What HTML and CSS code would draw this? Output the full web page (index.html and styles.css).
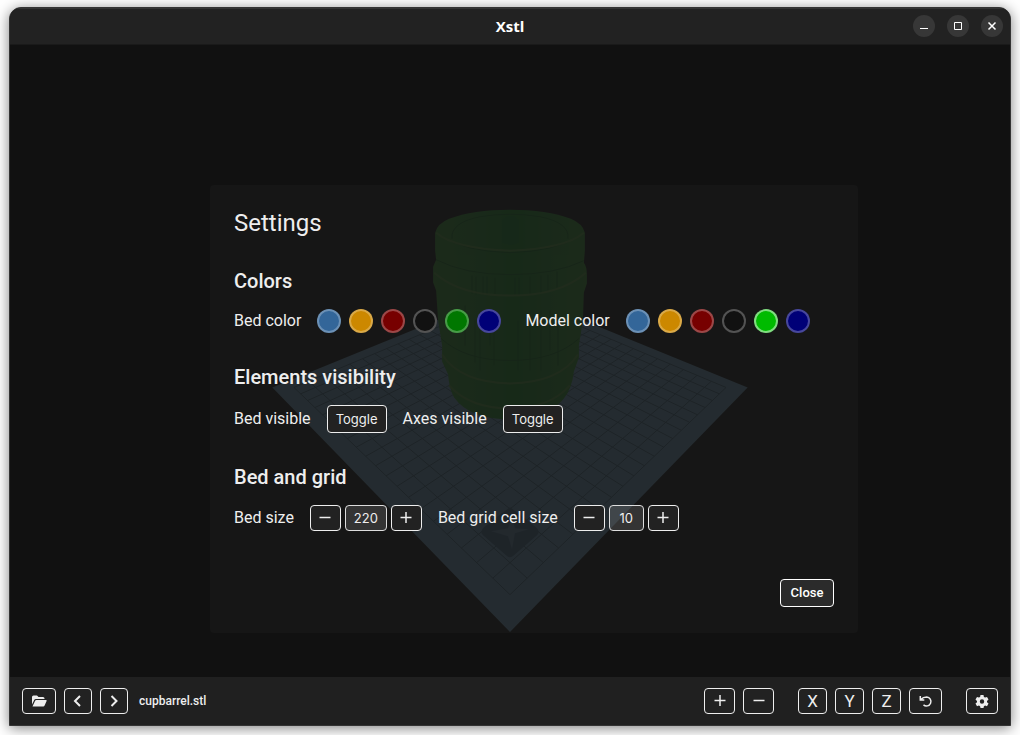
FILE: index.html
```html
<!DOCTYPE html>
<html lang="en">
<head>
<meta charset="utf-8">
<title>Xstl</title>
<link rel="stylesheet" href="styles.css">
</head>
<body>
<div class="window">
  <header class="titlebar">
    <h1 class="title">Xstl</h1>
    <div class="window-controls">
      <button class="window-button" aria-label="Minimize"><svg viewBox="0 0 22 22"><path d="M7 13.5h8"/></svg></button>
      <button class="window-button" aria-label="Maximize"><svg viewBox="0 0 22 22"><path d="M7.5 7.5h7v7h-7z"/></svg></button>
      <button class="window-button" aria-label="Close window"><svg viewBox="0 0 22 22"><path d="M7.5 7.500l7 7M14.500 7.500l-7 7" stroke-width="1.500"/></svg></button>
    </div>
  </header>

  <main class="viewport">
    <svg class="scene" viewBox="0 0 1000 633" aria-hidden="true">
      <defs>
        <linearGradient id="wood" x1="0" x2="1" y1="0" y2="0">
          <stop offset="0" stop-color="#36942c"/>
          <stop offset="0.3" stop-color="#26902a"/>
          <stop offset="0.52" stop-color="#168c1e"/>
          <stop offset="0.75" stop-color="#26902a"/>
          <stop offset="1" stop-color="#36942c"/>
        </linearGradient>
      </defs>
      <g transform="translate(-10 -44)">
        <path class="bed" d="M510 632 748 387 510 290 272 387z"/>
        <path class="grid-lines" id="grid"/>
        <path class="mark" d="M484 527 Q496 517 510 507 Q524 517 536 527 Q541 531 537 535 L514 555 Q510 559 506 555 L483 535 Q479 531 484 527z"/>
        <path class="mark-cross" d="M491 531l17-3 4-12 3 12 14 1-14 4-3 16-4-13z"/>
        <path fill="url(#wood)" d="M435 232 Q437 223 449 218 Q473 209 510 209 Q547 209 571 218 Q583 223 585 232 V250 L584 262 Q587 266 587 274 V283 L584 292 L583 320 L579 345 V357 L574 371 Q572 388 564 398 Q547 419 510 419 Q470 419 454 397 Q449 388 448 374 L442 361 V345 L438 320 L436 290 L433 282 V266 L436 259 L435 250z"/>
        <g class="barrel-dark">
          <path d="M440 235 Q465 251 510 252 Q555 251 580 235"/>
          <path d="M436 259 Q465 274 510 274 Q555 274 584 260"/>
          <path d="M441 338 Q465 360 510 360 Q555 360 579 338"/>
          <path d="M452 238 Q450 222 480 216 Q510 211 540 216 Q570 222 568 238"/>
          <path d="M472 275v18M476 276v18M483 276v18M487 276v19M495 277v18M515 277v18M519 277v18M530 276v18M541 275v18M548 274v16M557 271v16M465 305v40M475 320v42M480 310v60M490 315v30M494 320v45M518 320v50M530 310v60M541 310v60M550 310v40M558 315v50"/>
        </g>
        <g class="barrel-light">
          <path d="M436 232 Q455 248 510 250 Q565 248 584 232"/>
          <path d="M434 272 Q460 295 510 295 Q560 295 586 272"/>
          <path d="M442 354 Q460 382 510 383 Q560 382 578 354"/>
          <path d="M449 385 Q470 408 510 408 Q550 408 570 385"/>
        </g>
        <path class="barrel-core" d="M502 219 Q510 211 519 219 V242 Q510 246 502 242z"/>
      </g>
    </svg>

    <section class="settings" aria-labelledby="settings-title">
      <h2 class="settings-title" id="settings-title">Settings</h2>

      <div class="group">
        <h3 class="group-title">Colors</h3>
        <div class="row color-row">
          <div class="field" role="group" aria-labelledby="bed-color">
            <span id="bed-color">Bed color</span>
            <div class="swatches">
              <button class="swatch steel" aria-label="Blue"></button>
              <button class="swatch orange" aria-label="Orange"></button>
              <button class="swatch red" aria-label="Red"></button>
              <button class="swatch black" aria-label="Black"></button>
              <button class="swatch green" aria-label="Green"></button>
              <button class="swatch navy" aria-label="Navy"></button>
            </div>
          </div>
          <div class="field" role="group" aria-labelledby="model-color">
            <span id="model-color">Model color</span>
            <div class="swatches">
              <button class="swatch steel" aria-label="Blue"></button>
              <button class="swatch orange" aria-label="Orange"></button>
              <button class="swatch red" aria-label="Red"></button>
              <button class="swatch black" aria-label="Black"></button>
              <button class="swatch green selected" aria-label="Green"></button>
              <button class="swatch navy" aria-label="Navy"></button>
            </div>
          </div>
        </div>
      </div>

      <div class="group">
        <h3 class="group-title">Elements visibility</h3>
        <div class="row">
          <div class="field"><label for="bed-toggle">Bed visible</label><button class="button" id="bed-toggle">Toggle</button></div>
          <div class="field"><label for="axes-toggle">Axes visible</label><button class="button" id="axes-toggle">Toggle</button></div>
        </div>
      </div>

      <div class="group">
        <h3 class="group-title">Bed and grid</h3>
        <div class="row">
          <div class="field">
            <label for="bed-size">Bed size</label>
            <div class="stepper">
              <button class="icon-button" aria-label="Decrease bed size"><svg viewBox="0 0 16 16"><path class="line" d="M2.500 7.500h11"/></svg></button>
              <input class="number" id="bed-size" type="text" value="220">
              <button class="icon-button" aria-label="Increase bed size"><svg viewBox="0 0 16 16"><path class="line" d="M2.500 7.500h11M8 2v11"/></svg></button>
            </div>
          </div>
          <div class="field">
            <label for="cell-size">Bed grid cell size</label>
            <div class="stepper">
              <button class="icon-button" aria-label="Decrease cell size"><svg viewBox="0 0 16 16"><path class="line" d="M2.500 7.500h11"/></svg></button>
              <input class="number short" id="cell-size" type="text" value="10">
              <button class="icon-button" aria-label="Increase cell size"><svg viewBox="0 0 16 16"><path class="line" d="M2.500 7.500h11M8 2v11"/></svg></button>
            </div>
          </div>
        </div>
      </div>

      <div class="actions"><button class="button close">Close</button></div>
    </section>
  </main>

  <footer class="toolbar">
    <button class="icon-button folder" aria-label="Open file"><svg viewBox="0 0 16 16"><path class="solid" d="M1 11.500V4q0-1.500 1.500-1.500H6l1.500 1.500H12q1.500 0 1.500 1.500V6H5Q3.700 6 3.200 7zM1.500 13.500 4 8q.4-1 1.500-1H15q1 0 .6 1l-2 4.600q-.4.900-1.400.900z"/></svg></button>
    <button class="icon-button arrow" aria-label="Previous file"><svg viewBox="0 0 16 16"><path class="line thick" d="M10 3 5 8l5 5"/></svg></button>
    <button class="icon-button arrow" aria-label="Next file"><svg viewBox="0 0 16 16"><path class="line thick" d="M5.500 3l5 5-5 5"/></svg></button>
    <span class="filename">cupbarrel.stl</span>
    <div class="tools">
      <div class="tool-group">
        <button class="icon-button" aria-label="Zoom in"><svg viewBox="0 0 16 16"><path class="line" d="M2.500 7.500h11M8 2v11"/></svg></button>
        <button class="icon-button" aria-label="Zoom out"><svg viewBox="0 0 16 16"><path class="line" d="M2.500 7.500h11"/></svg></button>
      </div>
      <div class="tool-group">
        <button class="icon-button axis">X</button>
        <button class="icon-button axis">Y</button>
        <button class="icon-button axis">Z</button>
        <button class="icon-button reset" aria-label="Reset view"><svg viewBox="0 0 16 16"><path class="line" d="M2.300 3v4h4M2.800 6.500Q5 4 8.800 4A4.500 4.500 0 1 1 5.500 11.900"/></svg></button>
      </div>
      <div class="tool-group">
        <button class="icon-button gear" aria-label="Settings"><svg viewBox="0 0 16 16"><path class="solid" fill-rule="evenodd" d="M6.500 2h3l.4 1.900 1.200.7 1.900-.6 1.500 2.600-1.500 1.300v1.400l1.500 1.300-1.500 2.600-1.900-.6-1.200.7-.4 1.700h-3l-.4-1.700-1.200-.7-1.900.6-1.500-2.600L3 9.300V7.900L1.500 6.600 3 4l1.900.6 1.200-.7zM8 6.300a2.200 2.200 0 1 0 0 4.400 2.200 2.200 0 0 0 0-4.400z"/></svg></button>
      </div>
    </div>
  </footer>
</div>
<script src="scene.js"></script>
</body>
</html>
```
FILE: styles.css
```css
* { box-sizing: border-box; }

body {
  margin: 0;
  min-height: 100vh;
  display: flex;
  padding: 7px 9px 9px;
  background: #fff;
  color: #eee;
  font-family: Roboto, "Liberation Sans", sans-serif;
  font-size: 16px;
  line-height: 20px;
}

h1, h2, h3 { margin: 0; }
button, input { font: inherit; color: inherit; margin: 0; padding: 0; }

.window {
  flex: 1;
  display: flex;
  flex-direction: column;
  overflow: hidden;
  border: 1px solid #343434;
  border-radius: 12px 12px 0 0;
  background: #111;
  box-shadow: 0 2px 14px rgba(0, 0, 0, 0.5);
}

.titlebar {
  display: grid;
  grid-template-columns: 1fr auto 1fr;
  align-items: center;
  height: 37px;
  padding: 0 7px 2px;
  background: #222;
  border-top: 1px solid #343434;
  border-bottom: 1px solid #1a1a1a;
}
.title {
  grid-column: 2;
  font: bold 15px/20px "Open Sans", "Noto Sans", sans-serif;
  color: #fff;
}
.window-controls { display: flex; justify-content: flex-end; gap: 12px; }
.window-button {
  width: 22px;
  height: 22px;
  border: 0;
  border-radius: 50%;
  background: #373737;
}
.window-button svg { display: block; width: 22px; height: 22px; fill: none; stroke: #fff; }

.viewport { position: relative; flex: 1; }
.scene { position: absolute; inset: 0; width: 100%; height: 100%; }
.bed { fill: #6e9dba; }
.grid-lines { fill: none; stroke: #3f647c; }
.mark { fill: #456a88; }
.mark-cross { fill: #638aa8; }
.barrel-dark { fill: none; stroke: #0c641a; opacity: 0.7; }
.barrel-light { fill: none; stroke: #5aa03c; stroke-width: 2; opacity: 0.8; }
.barrel-core { fill: #108426; opacity: 0.7; }

.settings {
  position: absolute;
  top: 140px;
  left: 20%;
  box-sizing: content-box;
  width: 60%;
  padding: 24px 24px 26px;
  border-radius: 4px;
  background: rgba(24, 24, 24, 0.85);
}
.settings-title { font-size: 24px; line-height: 28px; font-weight: 400; }
.group { margin-top: 32px; }
.group-title { font-size: 20px; line-height: 24px; font-weight: 500; margin-bottom: 16px; }
.row { display: flex; gap: 16px; }
.color-row { gap: 24px; }
.field { display: flex; align-items: center; gap: 16px; }
.swatches { display: flex; gap: 8px; }
.swatch {
  width: 24px;
  height: 24px;
  border: 2px solid rgba(255, 255, 255, 0.28);
  border-radius: 50%;
}
.steel { background: #369; }
.orange { background: #c80; }
.red { background: #700; }
.black { background: #111; }
.green { background: #070; }
.navy { background: #007; }
.selected { background: #0b0; border-color: rgba(255, 255, 255, 0.5); }

.button {
  min-width: 60px;
  height: 28px;
  padding: 0 8px;
  border: 1px solid #eee;
  border-radius: 4px;
  background: #222;
  font-family: Inter, Roboto, sans-serif;
  font-size: 13px;
}
.close {
  min-width: 54px;
  border-color: #fff;
  background: #2b2b2b;
  color: #fff;
  font-family: Roboto, sans-serif;
  font-weight: 500;
}
.actions { display: flex; justify-content: flex-end; margin-top: 48px; }

.stepper { display: flex; align-items: center; gap: 4px; }
.number {
  width: 42px;
  height: 26px;
  border: 1px solid #ddd;
  border-radius: 4px;
  background: rgba(255, 255, 255, 0.13);
  font-family: Inter, Roboto, sans-serif;
  font-size: 13px;
  text-align: center;
}
.short { width: 35px; }

.icon-button {
  display: flex;
  align-items: center;
  justify-content: center;
  width: 31px;
  height: 26px;
  border: 1px solid #eee;
  border-radius: 4px;
  background: #222;
}
.icon-button svg { width: 16px; height: 16px; }
.line { fill: none; stroke: #eee; stroke-width: 1.5; }
.thick { stroke-width: 2; }
.solid { fill: #eee; }
.folder { width: 34px; }
.arrow { width: 28px; }
.axis { width: 29px; font-size: 17px; }
.reset { width: 33px; }
.gear { width: 32px; }

.toolbar {
  display: flex;
  align-items: center;
  gap: 8px;
  height: 48px;
  padding: 0 12px;
  background: #202020;
}
.filename { margin-left: 3px; font-size: 12px; font-weight: 500; }
.tools { display: flex; gap: 24px; margin-left: auto; }
.tool-group { display: flex; gap: 8px; }
```
FILE: scene.js
```js
// Perspective projection of the bed plane; u and v run from 0 to 1 along its two near edges.
function project(u, v) {
  const w = 1 + 0.758 * (u + v);
  const x = 510 + 418.4 * (u - v) / w;
  const y = (631 + 49.3 * (u + v)) / w;
  return x.toFixed(1) + ' ' + y.toFixed(1);
}

const cells = 22;
const start = 1 / cells;
const end = 1 - start;
let d = '';
for (let i = 1; i < cells; i++) {
  const t = i / cells;
  d += 'M' + project(t, start) + 'L' + project(t, end);
  d += 'M' + project(start, t) + 'L' + project(end, t);
}
document.getElementById('grid').setAttribute('d', d);
```
